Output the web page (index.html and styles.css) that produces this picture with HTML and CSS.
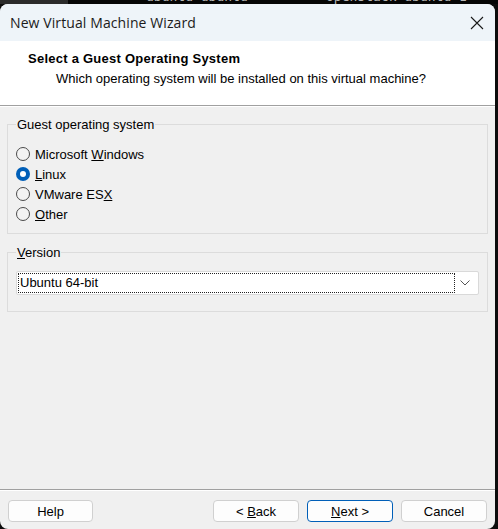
FILE: index.html
```html
<!DOCTYPE html>
<html>
<head>
<meta charset="utf-8">
<link rel="stylesheet" href="styles.css">
</head>
<body>
<div class="backdrop">
  <div class="term-left"></div>
  <div class="term-text">ubuntu-ubuntu          openstack-ubuntu-1</div>
</div>
<div class="window">
  <div class="titlebar">
    <span class="title">New Virtual Machine Wizard</span>
    <svg class="close" width="14" height="14" viewBox="0 0 14 14"><path d="M1 1 L13 13 M13 1 L1 13" stroke="#1a1a1a" stroke-width="1.1" fill="none"/></svg>
  </div>
  <div class="header">
    <div class="h-title">Select a Guest Operating System</div>
    <div class="h-sub">Which operating system will be installed on this virtual machine?</div>
  </div>
  <div class="content">
    <fieldset class="group group-os">
      <legend>Guest operating system</legend>
      <div class="radios">
        <label class="radio"><span class="dot"></span><span class="lbl">Microsoft <u>W</u>indows</span></label>
        <label class="radio checked"><span class="dot"></span><span class="lbl"><u>L</u>inux</span></label>
        <label class="radio"><span class="dot"></span><span class="lbl">VMware ES<u>X</u></span></label>
        <label class="radio"><span class="dot"></span><span class="lbl"><u>O</u>ther</span></label>
      </div>
    </fieldset>
    <fieldset class="group group-ver">
      <legend><u>V</u>ersion</legend>
      <div class="select">
        <span class="sel-text">Ubuntu 64-bit</span>
        <svg class="chev" width="10" height="6" viewBox="0 0 10 6"><path d="M0.5 0.5 L5 5 L9.5 0.5" stroke="#555" stroke-width="1" fill="none"/></svg>
      </div>
    </fieldset>
  </div>
  <div class="footer">
    <button class="btn help">Help</button>
    <div class="spacer"></div>
    <button class="btn">&lt; <u>B</u>ack</button>
    <button class="btn primary"><u>N</u>ext &gt;</button>
    <button class="btn">Cancel</button>
  </div>
</div>
</body>
</html>
```
FILE: styles.css
```css
html, body {
  margin: 0;
  padding: 0;
  width: 498px;
  height: 529px;
  overflow: hidden;
  background: #0c0c0c;
}
body {
  position: relative;
  font-family: "Liberation Sans", Arial, sans-serif;
}
.backdrop {
  height: 4px;
  position: relative;
  overflow: hidden;
  background: #050505;
}
.term-left {
  position: absolute;
  left: 0;
  top: 0;
  width: 68px;
  height: 4px;
  background: #2b2b2b;
}
.term-text {
  position: absolute;
  left: 146px;
  top: -10px;
  font-family: "DejaVu Sans Mono", monospace;
  font-size: 13px;
  line-height: 14px;
  color: #b8b8b8;
  white-space: pre;
}
.window {
  width: 495px;
  height: 525px;
  background: #f0f0f0;
  border-radius: 8px;
  overflow: hidden;
  display: flex;
  flex-direction: column;
  box-sizing: border-box;
}
.titlebar {
  height: 37px;
  flex: none;
  background: #eef4f9;
  display: flex;
  align-items: center;
  justify-content: space-between;
  padding: 0 11px 0 10px;
}
.title {
  font-family: "Open Sans", "Noto Sans", sans-serif;
  font-size: 14px;
  color: #1b1b1b;
  letter-spacing: 0.1px;
}
.close { display: block; }
.header {
  height: 65px;
  flex: none;
  background: #ffffff;
  border-bottom: 1px solid #a0a0a0;
  box-shadow: 0 1px 0 #ffffff;
  box-sizing: border-box;
  padding: 10px 0 0 28px;
  font-size: 13px;
  color: #000;
}
.h-title {
  font-weight: bold;
  line-height: 15px;
  letter-spacing: 0.25px;
}
.h-sub {
  margin-top: 5px;
  padding-left: 28px;
  line-height: 15px;
}
.content {
  flex: 1;
  padding: 11px 7px 0 7px;
  font-size: 13px;
  color: #000;
}
.group {
  margin: 0;
  border: 1px solid #dcdcdc;
  padding: 0 8px;
  min-width: 0;
}
.group legend {
  padding: 0 1px;
  margin-left: 0;
  line-height: 15px;
}
.group-os {
  height: 117px;
  box-sizing: border-box;
}
.radios {
  display: flex;
  flex-direction: column;
  padding-top: 12px;
}
.radio {
  display: flex;
  align-items: center;
  height: 20px;
  gap: 5px;
}
.lbl { white-space: nowrap; }
.dot {
  width: 12px;
  height: 12px;
  border-radius: 50%;
  border: 1px solid #4a4a4a;
  background: #f3f3f3;
  box-sizing: content-box;
  flex: none;
}
.checked .dot {
  width: 14px;
  height: 14px;
  border: none;
  background: #005fb8;
  position: relative;
}
.checked .dot::after {
  content: "";
  position: absolute;
  left: 4px;
  top: 4px;
  width: 6px;
  height: 6px;
  border-radius: 50%;
  background: #ffffff;
}
.group-ver {
  margin-top: 11px;
  height: 67px;
  box-sizing: border-box;
}
.select {
  margin-top: 11px;
  height: 24px;
  background: #ffffff;
  border: 1px solid #d9d9d9;
  border-radius: 2px;
  box-sizing: border-box;
  display: flex;
  align-items: center;
  padding: 0 8px 0 1px;
  justify-content: space-between;
}
.sel-text {
  width: 437px;
  height: 20px;
  line-height: 20px;
  outline: 1px dotted #222;
  outline-offset: -1px;
  padding-left: 2px;
  box-sizing: border-box;
}
.chev { display: block; }
.footer {
  flex: none;
  height: 29px;
  border-top: 1px solid #a0a0a0;
  box-shadow: inset 0 1px 0 #ffffff;
  display: flex;
  align-items: flex-start;
  padding: 10px 8px 0 8px;
  gap: 8px;
  box-sizing: content-box;
}
.spacer { flex: 1; }
.btn {
  width: 86px;
  height: 22px;
  margin: 0;
  background: #fdfdfd;
  border: 1px solid #d0d0d0;
  border-radius: 4px;
  font-family: "Liberation Sans", Arial, sans-serif;
  font-size: 13px;
  color: #000;
  padding: 0;
}
.btn.help { width: 85px; }
.btn.primary {
  border-color: #005fb8;
}
```
